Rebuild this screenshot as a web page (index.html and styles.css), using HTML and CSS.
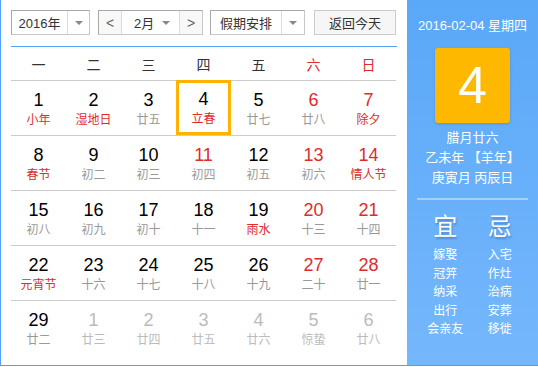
FILE: index.html
```html
<!DOCTYPE html>
<html>
<head>
  <meta charset="UTF-8">
  <title>万年历</title>
  <link rel="stylesheet" href="styles.css">
</head>
<body>

<div class="calendar">
  <div class="main">
    <div class="toolbar">
      <div class="select year-select">
        <span class="select-text">2016年</span>
        <span class="select-arrow"><i class="caret"></i></span>
      </div>
      <div class="select month-select">
        <span class="nav-btn">&lt;</span>
        <span class="month-text">2月<i class="caret"></i></span>
        <span class="nav-btn">&gt;</span>
      </div>
      <div class="select holiday-select">
        <span class="select-text">假期安排</span>
        <span class="select-arrow"><i class="caret"></i></span>
      </div>
      <button class="today-btn">返回今天</button>
    </div>

    <div class="weekdays">
      <span>一</span><span>二</span><span>三</span><span>四</span><span>五</span>
      <span class="weekend">六</span><span class="weekend">日</span>
    </div>

    <div class="days">
      <div class="day"><b>1</b><em class="fest">小年</em></div>
      <div class="day"><b>2</b><em class="fest">湿地日</em></div>
      <div class="day"><b>3</b><em>廿五</em></div>
      <div class="day today"><b>4</b><em class="fest">立春</em></div>
      <div class="day"><b>5</b><em>廿七</em></div>
      <div class="day weekend"><b>6</b><em>廿八</em></div>
      <div class="day weekend"><b>7</b><em class="fest">除夕</em></div>

      <div class="day"><b>8</b><em class="fest">春节</em></div>
      <div class="day"><b>9</b><em>初二</em></div>
      <div class="day"><b>10</b><em>初三</em></div>
      <div class="day holiday"><b>11</b><em>初四</em></div>
      <div class="day"><b>12</b><em>初五</em></div>
      <div class="day weekend"><b>13</b><em>初六</em></div>
      <div class="day weekend"><b>14</b><em class="fest">情人节</em></div>

      <div class="day"><b>15</b><em>初八</em></div>
      <div class="day"><b>16</b><em>初九</em></div>
      <div class="day"><b>17</b><em>初十</em></div>
      <div class="day"><b>18</b><em>十一</em></div>
      <div class="day"><b>19</b><em class="fest">雨水</em></div>
      <div class="day weekend"><b>20</b><em>十三</em></div>
      <div class="day weekend"><b>21</b><em>十四</em></div>

      <div class="day"><b>22</b><em class="fest">元宵节</em></div>
      <div class="day"><b>23</b><em>十六</em></div>
      <div class="day"><b>24</b><em>十七</em></div>
      <div class="day"><b>25</b><em>十八</em></div>
      <div class="day"><b>26</b><em>十九</em></div>
      <div class="day weekend"><b>27</b><em>二十</em></div>
      <div class="day weekend"><b>28</b><em>廿一</em></div>

      <div class="day"><b>29</b><em>廿二</em></div>
      <div class="day other"><b>1</b><em>廿三</em></div>
      <div class="day other"><b>2</b><em>廿四</em></div>
      <div class="day other"><b>3</b><em>廿五</em></div>
      <div class="day other"><b>4</b><em>廿六</em></div>
      <div class="day other"><b>5</b><em>惊蛰</em></div>
      <div class="day other"><b>6</b><em>廿八</em></div>
    </div>
  </div>

  <div class="side">
    <div class="side-date">2016-02-04 星期四</div>
    <div class="big-day">4</div>
    <div class="lunar">
      <p>腊月廿六</p>
      <p>乙未年 【羊年】</p>
      <p>庚寅月 丙辰日</p>
    </div>
    <div class="almanac">
      <div class="almanac-col">
        <div class="almanac-title">宜</div>
        <p>嫁娶</p><p>冠笄</p><p>纳采</p><p>出行</p><p>会亲友</p>
      </div>
      <div class="almanac-col">
        <div class="almanac-title">忌</div>
        <p>入宅</p><p>作灶</p><p>治病</p><p>安葬</p><p>移徙</p>
      </div>
    </div>
  </div>
</div>

</body>
</html>
```

FILE: styles.css
```css
* {
  margin: 0;
  padding: 0;
  box-sizing: border-box;
}

body {
  font-family: "Liberation Sans", "Noto Sans CJK SC", sans-serif;
  background: #fff;
  color: #333;
}

.calendar {
  display: flex;
  width: 538px;
  height: 366px;
  border-left: 1px solid #4ea1f6;
  border-bottom: 1px solid #4ea1f6;
}

.main {
  width: 406px;
  padding: 0 10px;
}

/* toolbar */

.toolbar {
  display: flex;
  align-items: center;
  height: 47px;
  padding-top: 10px;
  padding-bottom: 11px;
  border-bottom: 1px solid #55a5f7;
}

.select {
  display: flex;
  height: 25px;
  border: 1px solid #c8c8c8;
  border-top-color: #a8a8a8;
  border-left-color: #a8a8a8;
  font-size: 13px;
  color: #333;
  background: #fff;
}

.select-text {
  display: flex;
  align-items: center;
  justify-content: center;
}

.select-arrow {
  display: flex;
  align-items: center;
  justify-content: center;
  border-left: 1px solid #ddd;
}

.caret {
  display: inline-block;
  width: 0;
  height: 0;
  border-left: 4px solid transparent;
  border-right: 4px solid transparent;
  border-top: 4px solid #888;
}

.year-select {
  width: 79px;
}

.year-select .select-text {
  width: 55px;
}

.year-select .select-arrow {
  flex: 1;
}

.month-select {
  width: 105px;
  margin-left: 8px;
}

.nav-btn {
  display: flex;
  align-items: center;
  justify-content: center;
  width: 22px;
  color: #666;
  font-size: 14px;
  background: #f8f8f8;
}

.month-text {
  display: flex;
  align-items: center;
  justify-content: space-between;
  flex: 1;
  padding: 0 9px 0 12px;
  border-left: 1px solid #ddd;
  border-right: 1px solid #ddd;
}

.holiday-select {
  width: 95px;
  margin-left: 7px;
}

.holiday-select .select-text {
  width: 70px;
}

.holiday-select .select-arrow {
  flex: 1;
}

.today-btn {
  width: 82px;
  height: 25px;
  margin-left: 9px;
  border: 1px solid #ccc;
  background: #f6f6f6;
  font-family: inherit;
  font-size: 13px;
  color: #333;
}

/* grid */

.weekdays {
  display: grid;
  grid-template-columns: repeat(7, 55px);
  height: 33px;
  align-items: center;
  text-align: center;
  font-size: 14px;
  color: #333;
}

.weekdays .weekend {
  color: #e02b2b;
}

.days {
  display: grid;
  grid-template-columns: repeat(7, 55px);
}

.day {
  display: flex;
  flex-direction: column;
  align-items: center;
  height: 55px;
  border-top: 1px solid #ccc;
  padding-top: 9px;
}

.day b {
  font-weight: normal;
  font-size: 18px;
  line-height: 20px;
  color: #000;
}

.day em {
  font-style: normal;
  font-size: 12px;
  line-height: 20px;
  color: #999;
}

.day em.fest {
  color: #e02b2b;
}

.day.weekend b,
.day.holiday b {
  color: #e02b2b;
}

.day.other b,
.day.other em {
  color: #bbb;
}

.day.today {
  border: 3px solid #ffb300;
  padding-top: 6px;
}

/* side panel */

.side {
  width: 131px;
  height: 365px;
  background: linear-gradient(#5aa8f8, #75b7fc);
  color: #fff;
  text-align: center;
}

.side-date {
  padding-top: 15px;
  height: 48px;
  font-size: 13px;
}

.big-day {
  width: 75px;
  height: 75px;
  margin: 0 auto;
  background: #ffb800;
  border-radius: 3px;
  box-shadow: 0 1px 3px rgba(0, 0, 0, 0.15);
  font-size: 52px;
  line-height: 75px;
}

.lunar {
  margin: 0 10px;
  padding: 5px 0 10px;
  border-bottom: 2px solid rgba(255, 255, 255, 0.4);
  font-size: 13px;
  line-height: 20px;
}

.almanac {
  display: flex;
  padding: 12px 11px 0;
}

.almanac-col {
  width: 55px;
  font-size: 12px;
  line-height: 18.5px;
}

.almanac-title {
  font-size: 24px;
  line-height: 30px;
  margin-bottom: 4px;
  text-shadow: 1px 2px 2px rgba(0, 0, 80, 0.25);
}
```
